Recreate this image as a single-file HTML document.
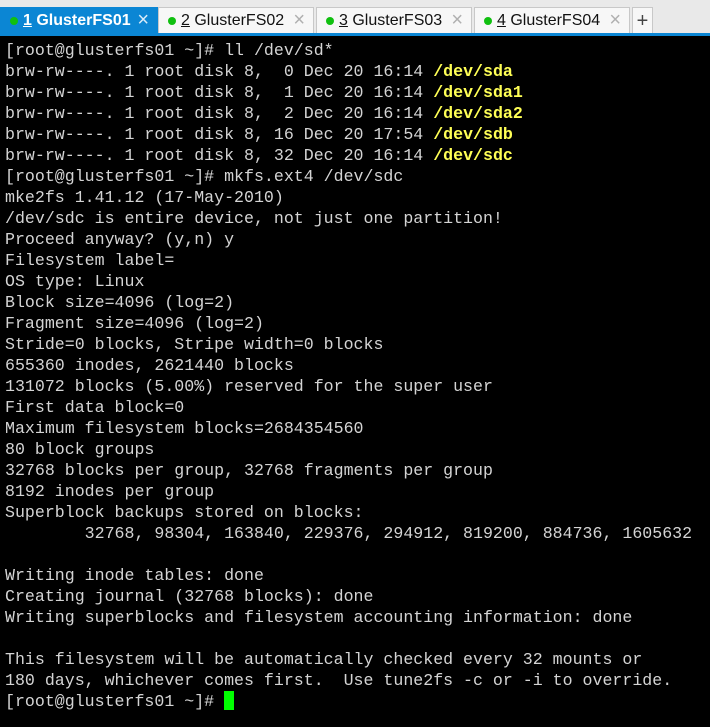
<!DOCTYPE html>
<html><head><meta charset="utf-8"><style>
*{margin:0;padding:0;box-sizing:border-box}
html,body{width:710px;height:727px;overflow:hidden;background:#000}
#bar{position:absolute;left:0;top:0;width:710px;height:36px;background:#e9e9e9}
.tab{position:absolute;top:7px;height:27px;width:156px;background:#f7f7f7;border:1px solid #c8c8c8;border-bottom:none;font-family:"Liberation Sans",sans-serif;font-size:16px;color:#111;line-height:26px}
.tab .d{position:absolute;left:9px;top:9px;width:8px;height:8px;border-radius:50%;background:#10c010}
.tab .t{position:absolute;left:22px}
.tab .x{position:absolute;right:8px;top:-1px;color:#b0b0b0;font-size:20px;font-weight:normal}
.tab u{text-decoration:underline}
.act{background:#0b86d4;border-color:#0b86d4;color:#fff;font-weight:bold}
.act .x{color:#d8ebf8}
#line{position:absolute;left:0;top:33px;width:710px;height:3px;background:#0b86d4}
#term{position:absolute;left:5px;top:40px;font-family:"Liberation Mono",monospace;font-size:16.6px;line-height:21px;color:#d4d4d4;white-space:pre}
.y{color:#ffff55;font-weight:bold}
#cur{display:inline-block;width:10px;height:19px;background:#00ff00;vertical-align:-4px}
</style></head><body>
<div id="bar">
<div class="tab act" style="left:0;width:158px"><span class="d"></span><span class="t"><u>1</u> GlusterFS01</span><span class="x">×</span></div>
<div class="tab" style="left:158px"><span class="d"></span><span class="t"><u>2</u> GlusterFS02</span><span class="x">×</span></div>
<div class="tab" style="left:316px"><span class="d"></span><span class="t"><u>3</u> GlusterFS03</span><span class="x">×</span></div>
<div class="tab" style="left:474px"><span class="d"></span><span class="t"><u>4</u> GlusterFS04</span><span class="x">×</span></div>
<div class="tab" style="left:632px;width:21px;text-align:center;font-size:20px;color:#444">+</div>
</div>
<div id="line"></div>
<div id="term">[root@glusterfs01 ~]# ll /dev/sd*
brw-rw----. 1 root disk 8,  0 Dec 20 16:14 <span class="y">/dev/sda</span>
brw-rw----. 1 root disk 8,  1 Dec 20 16:14 <span class="y">/dev/sda1</span>
brw-rw----. 1 root disk 8,  2 Dec 20 16:14 <span class="y">/dev/sda2</span>
brw-rw----. 1 root disk 8, 16 Dec 20 17:54 <span class="y">/dev/sdb</span>
brw-rw----. 1 root disk 8, 32 Dec 20 16:14 <span class="y">/dev/sdc</span>
[root@glusterfs01 ~]# mkfs.ext4 /dev/sdc
mke2fs 1.41.12 (17-May-2010)
/dev/sdc is entire device, not just one partition!
Proceed anyway? (y,n) y
Filesystem label=
OS type: Linux
Block size=4096 (log=2)
Fragment size=4096 (log=2)
Stride=0 blocks, Stripe width=0 blocks
655360 inodes, 2621440 blocks
131072 blocks (5.00%) reserved for the super user
First data block=0
Maximum filesystem blocks=2684354560
80 block groups
32768 blocks per group, 32768 fragments per group
8192 inodes per group
Superblock backups stored on blocks:
        32768, 98304, 163840, 229376, 294912, 819200, 884736, 1605632

Writing inode tables: done
Creating journal (32768 blocks): done
Writing superblocks and filesystem accounting information: done

This filesystem will be automatically checked every 32 mounts or
180 days, whichever comes first.  Use tune2fs -c or -i to override.
[root@glusterfs01 ~]# <span id="cur"></span></div>
</body></html>
